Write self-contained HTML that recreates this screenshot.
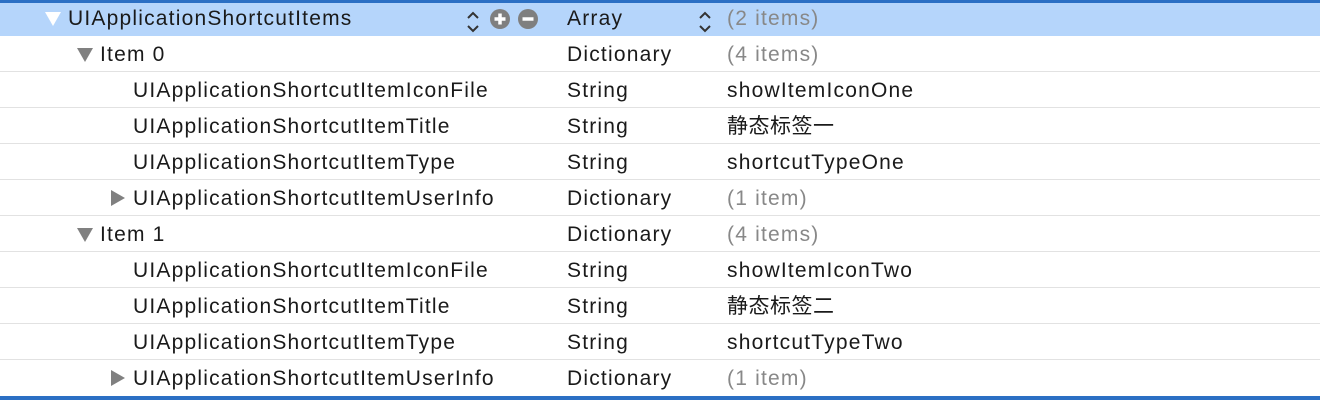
<!DOCTYPE html>
<html><head><meta charset="utf-8"><style>
body{margin:0;width:1320px;height:400px;background:#fff;overflow:hidden;font-family:"Liberation Sans","Noto Sans CJK SC",sans-serif;font-size:21px;letter-spacing:1.2px;color:#1a1a1a;position:relative}
.r{position:absolute;left:0;width:1320px;height:36px;border-bottom:1px solid #e2e2e2;box-sizing:border-box}
.r span{position:absolute;top:7px;line-height:24px;white-space:nowrap}
.r span.cjk{top:7px;letter-spacing:0.5px}
.g{color:#888}
.tri{position:absolute;width:0;height:0}
.dn{border-left:8px solid transparent;border-right:8px solid transparent;border-top:14px solid #808080;top:12px}
.rt{border-top:8px solid transparent;border-bottom:8px solid transparent;border-left:14px solid #808080;top:10px}
.c{position:absolute;top:9px;width:20px;height:20px;border-radius:50%;background:#7f7f7f}
</style></head><body>
<div class="r" style="top:0;background:#b5d5fb;border-top:3px solid #2b6fc4;border-bottom:none">
 <div class="tri dn" style="left:45px;top:9px;border-top-color:#fff"></div>
 <span style="left:68px;top:4px">UIApplicationShortcutItems</span>
 <svg style="position:absolute;left:465px;top:5px" width="16" height="28"><path d="M3 10 L8 5 L13 10 M3 18 L8 23 L13 18" stroke="#333" stroke-width="2" fill="none"/></svg>
 <div class="c" style="left:490px;top:6px"><svg width="20" height="20"><path d="M4.5 10H15.5M10 4.5V15.5" stroke="#fff" stroke-width="3.5"/></svg></div>
 <div class="c" style="left:518px;top:6px"><svg width="20" height="20"><path d="M4.5 10H15.5" stroke="#fff" stroke-width="3.5"/></svg></div>
 <span style="left:567px;top:4px">Array</span>
 <svg style="position:absolute;left:697px;top:5px" width="16" height="28"><path d="M3 10 L8 5 L13 10 M3 18 L8 23 L13 18" stroke="#333" stroke-width="2" fill="none"/></svg>
 <span class="g" style="left:727px;top:4px">(2 items)</span>
</div>
<div class="r" style="top:36px"><div class="tri dn" style="left:77px"></div><span style="left:100px">Item 0</span><span style="left:567px">Dictionary</span><span class="g" style="left:727px">(4 items)</span></div>
<div class="r" style="top:72px"><span style="left:133px">UIApplicationShortcutItemIconFile</span><span style="left:567px">String</span><span style="left:727px">showItemIconOne</span></div>
<div class="r" style="top:108px"><span style="left:133px">UIApplicationShortcutItemTitle</span><span style="left:567px">String</span><span class="cjk" style="left:727px">静态标签一</span></div>
<div class="r" style="top:144px"><span style="left:133px">UIApplicationShortcutItemType</span><span style="left:567px">String</span><span style="left:727px">shortcutTypeOne</span></div>
<div class="r" style="top:180px"><div class="tri rt" style="left:111px"></div><span style="left:133px">UIApplicationShortcutItemUserInfo</span><span style="left:567px">Dictionary</span><span class="g" style="left:727px">(1 item)</span></div>
<div class="r" style="top:216px"><div class="tri dn" style="left:77px"></div><span style="left:100px">Item 1</span><span style="left:567px">Dictionary</span><span class="g" style="left:727px">(4 items)</span></div>
<div class="r" style="top:252px"><span style="left:133px">UIApplicationShortcutItemIconFile</span><span style="left:567px">String</span><span style="left:727px">showItemIconTwo</span></div>
<div class="r" style="top:288px"><span style="left:133px">UIApplicationShortcutItemTitle</span><span style="left:567px">String</span><span class="cjk" style="left:727px">静态标签二</span></div>
<div class="r" style="top:324px"><span style="left:133px">UIApplicationShortcutItemType</span><span style="left:567px">String</span><span style="left:727px">shortcutTypeTwo</span></div>
<div class="r" style="top:360px;border-bottom:none"><div class="tri rt" style="left:111px"></div><span style="left:133px">UIApplicationShortcutItemUserInfo</span><span style="left:567px">Dictionary</span><span class="g" style="left:727px">(1 item)</span></div>
<div style="position:absolute;left:0;top:396px;width:1320px;height:4px;background:#2b6fc4"></div>
</body></html>
